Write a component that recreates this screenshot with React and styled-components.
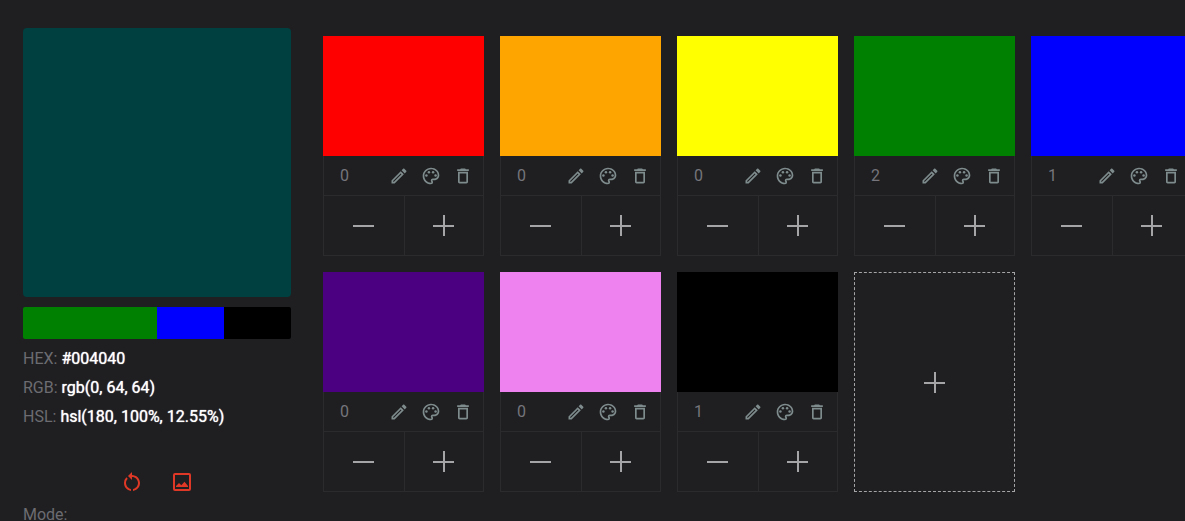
import React, { useState } from 'react';
import styled, { createGlobalStyle } from 'styled-components';
import {
  MdOutlineEdit,
  MdOutlinePalette,
  MdDeleteOutline,
  MdRestartAlt,
} from 'react-icons/md';

const GlobalStyle = createGlobalStyle`
  * {
    box-sizing: border-box;
  }

  html, body {
    margin: 0;
    overflow: hidden;
    background: #1f1f21;
  }

  body {
    color: #6c6c71;
    font-family: Roboto, sans-serif;
    font-size: 16px;
  }
`;

const Page = styled.main`
  display: flex;
  gap: 32px;
  height: 100vh;
  padding: 28px 0 0 23px;
  overflow: hidden;
`;

const Sidebar = styled.aside`
  flex: 0 0 268px;
`;

const MixedColor = styled.div`
  height: 269px;
  margin-bottom: 10px;
  border-radius: 4px;
  background: ${props => props.$color};
`;

const Ratio = styled.div`
  display: flex;
  height: 32px;
  margin-bottom: 5px;
  border-radius: 2px;
  overflow: hidden;
`;

const RatioPart = styled.div`
  flex: ${props => props.$parts} 1 0;
  background: ${props => props.$color};
`;

const Value = styled.div`
  line-height: 29px;
`;

const Strong = styled.span`
  color: #fff;
  text-shadow: 0 0 1px #fff;
`;

const Actions = styled.div`
  display: flex;
  justify-content: center;
  gap: 26px;
  margin: 39px 0 11px;
`;

const PlainButton = styled.button`
  display: flex;
  align-items: center;
  justify-content: center;
  margin: 0;
  padding: 0;
  border: 0;
  background: none;
  color: inherit;
  cursor: pointer;
`;

const ActionButton = styled(PlainButton)`
  width: 24px;
  height: 24px;
  color: #df3826;
`;

const Palette = styled.section`
  display: grid;
  grid-template-columns: repeat(5, 161px);
  grid-auto-rows: 220px;
  gap: 16px;
  padding-top: 8px;
`;

const Card = styled.article`
  display: flex;
  flex-direction: column;
`;

const Swatch = styled.div`
  height: 120px;
  background: ${props => props.$color};
`;

const Info = styled.div`
  display: flex;
  align-items: center;
  height: 40px;
  padding: 0 10px 0 16px;
  border: 1px solid #2b2b2d;
  border-top: 0;
`;

const Count = styled.span`
  margin-right: auto;
  color: #75757b;
`;

const Tools = styled.div`
  display: flex;
  gap: 12px;
`;

const ToolButton = styled(PlainButton)`
  color: #7f8c8d;
`;

const Counter = styled.div`
  display: grid;
  grid-template-columns: 1fr 1fr;
  height: 60px;
  border: 1px solid #2b2b2d;
  border-top: 0;
`;

const CounterButton = styled(PlainButton)`
  color: #a5a5a8;

  & + & {
    border-left: 1px solid #2b2b2d;
  }
`;

const AddButton = styled(PlainButton)`
  border: 1px dashed #a5a5a8;
  color: #a5a5a8;
`;

const MinusIcon = () => (
  <svg width="21" height="21" viewBox="0 0 21 21" fill="currentColor" aria-hidden="true">
    <path d="M0 10h21v2H0z" />
  </svg>
);

const PlusIcon = () => (
  <svg width="21" height="21" viewBox="0 0 21 21" fill="currentColor" aria-hidden="true">
    <path d="M0 10h10V0h2v10h9v2h-9v9h-2v-9H0z" />
  </svg>
);

const PictureIcon = () => (
  <svg width="24" height="24" viewBox="0 0 24 24" fill="currentColor" aria-hidden="true">
    <path d="M5 3h14a2 2 0 0 1 2 2v14a2 2 0 0 1-2 2H5a2 2 0 0 1-2-2V5a2 2 0 0 1 2-2zm0 2v14h14V5z" />
    <path d="M6 17v-1l3-3 2.300 2.300L14.500 11.700 18 16v1z" />
  </svg>
);

const initialColors = [
  { name: 'red', count: 0 },
  { name: 'orange', count: 0 },
  { name: 'yellow', count: 0 },
  { name: 'green', count: 2 },
  { name: 'blue', count: 1 },
  { name: 'indigo', count: 0 },
  { name: 'violet', count: 0 },
  { name: 'black', count: 1 },
];

const ColorCard = ({ color, onChange }) => (
  <Card>
    <Swatch $color={color.name} />
    <Info>
      <Count>{color.count}</Count>
      <Tools>
        <ToolButton aria-label={`Rename ${color.name}`}><MdOutlineEdit size={20} /></ToolButton>
        <ToolButton aria-label={`Pick ${color.name}`}><MdOutlinePalette size={20} /></ToolButton>
        <ToolButton aria-label={`Delete ${color.name}`}><MdDeleteOutline size={20} /></ToolButton>
      </Tools>
    </Info>
    <Counter>
      <CounterButton aria-label="Less" onClick={() => onChange(-1)}><MinusIcon /></CounterButton>
      <CounterButton aria-label="More" onClick={() => onChange(1)}><PlusIcon /></CounterButton>
    </Counter>
  </Card>
);

export default function App() {
  const [colors, setColors] = useState(initialColors);

  const change = (name, step) => {
    setColors(colors.map(color => (
      color.name === name ? { ...color, count: Math.max(0, color.count + step) } : color
    )));
  };

  return (
    <Page>
      <GlobalStyle />
      <Sidebar>
        <MixedColor $color="#004040" />
        <Ratio>
          {colors.filter(color => color.count > 0).map(color => (
            <RatioPart key={color.name} $color={color.name} $parts={color.count} />
          ))}
        </Ratio>
        <Value>HEX: <Strong>#004040</Strong></Value>
        <Value>RGB: <Strong>rgb(0, 64, 64)</Strong></Value>
        <Value>HSL: <Strong>hsl(180, 100%, 12.55%)</Strong></Value>
        <Actions>
          <ActionButton aria-label="Reset"><MdRestartAlt size={24} /></ActionButton>
          <ActionButton aria-label="Picture"><PictureIcon /></ActionButton>
        </Actions>
        <div>Mode:</div>
      </Sidebar>
      <Palette>
        {colors.map(color => (
          <ColorCard key={color.name} color={color} onChange={step => change(color.name, step)} />
        ))}
        <AddButton aria-label="Add color"><PlusIcon /></AddButton>
      </Palette>
    </Page>
  );
}
